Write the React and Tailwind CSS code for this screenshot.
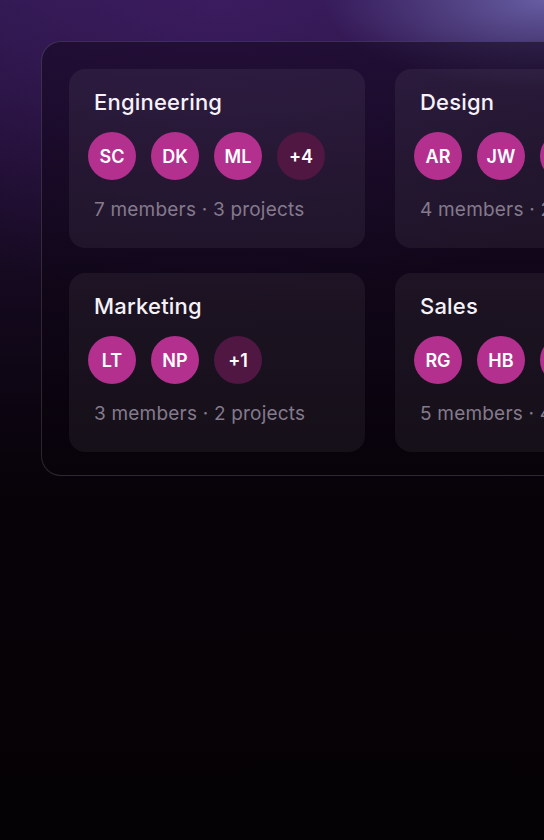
import React from "react";

const teams = [
  { name: "Engineering", avatars: ["SC", "DK", "ML"], more: "+4", members: 7, projects: 3 },
  { name: "Design", avatars: ["AR", "JW", "KP"], more: "+1", members: 4, projects: 2 },
  { name: "Marketing", avatars: ["LT", "NP"], more: "+1", members: 3, projects: 2 },
  { name: "Sales", avatars: ["RG", "HB", "TM"], more: "+2", members: 5, projects: 4 },
];

function Card({ t }) {
  return (
    <div className="w-[296px] h-[179px] rounded-[16px] bg-white/[0.055] pl-[25px] pt-[19px]">
      <div className="text-[22px] leading-[28px] font-medium text-[#f6f2f8] tracking-[0.2px]">{t.name}</div>
      <div className="flex gap-[15px] mt-[16px] -ml-[6px]">
        {t.avatars.map((a) => (
          <div
            key={a}
            className="w-[48px] h-[48px] rounded-full bg-[#b4308f] flex items-center justify-center text-white text-[18px] font-semibold"
          >
            {a}
          </div>
        ))}
        <div className="w-[48px] h-[48px] rounded-full bg-[#4f1742] flex items-center justify-center text-white text-[18px] font-semibold">
          {t.more}
        </div>
      </div>
      <div className="mt-[18px] text-[19px] leading-[24px] text-[#847a8c] tracking-[0.2px] whitespace-nowrap">
        {t.members} members · {t.projects} projects
      </div>
    </div>
  );
}

export default function App() {
  return (
    <div
      className="w-[544px] h-[840px] overflow-hidden bg-[#050205] bg-[radial-gradient(ellipse_220px_90px_at_100%_0%,rgba(120,115,190,0.75)_0%,transparent_100%),radial-gradient(ellipse_500px_300px_at_40%_0%,rgba(70,30,110,0.6)_0%,transparent_100%),linear-gradient(to_bottom,#2a1848_0%,#1c0d2c_20%,#0e0614_45%,#060207_60%,#050205_100%)] pt-[41px] pl-[41px]"
      style={{ fontFamily: "Inter, 'Noto Sans', sans-serif" }}
    >
      <div className="w-[720px] rounded-[20px] border border-white/[0.14] bg-[linear-gradient(to_bottom,rgba(18,6,28,0.55),rgba(8,3,10,0.5))] pt-[27px] pl-[27px] pb-[23px]">
        <div className="grid grid-cols-[296px_296px] gap-x-[30px] gap-y-[25px]">
          {teams.map((t) => (
            <Card key={t.name} t={t} />
          ))}
        </div>
      </div>
    </div>
  );
}
